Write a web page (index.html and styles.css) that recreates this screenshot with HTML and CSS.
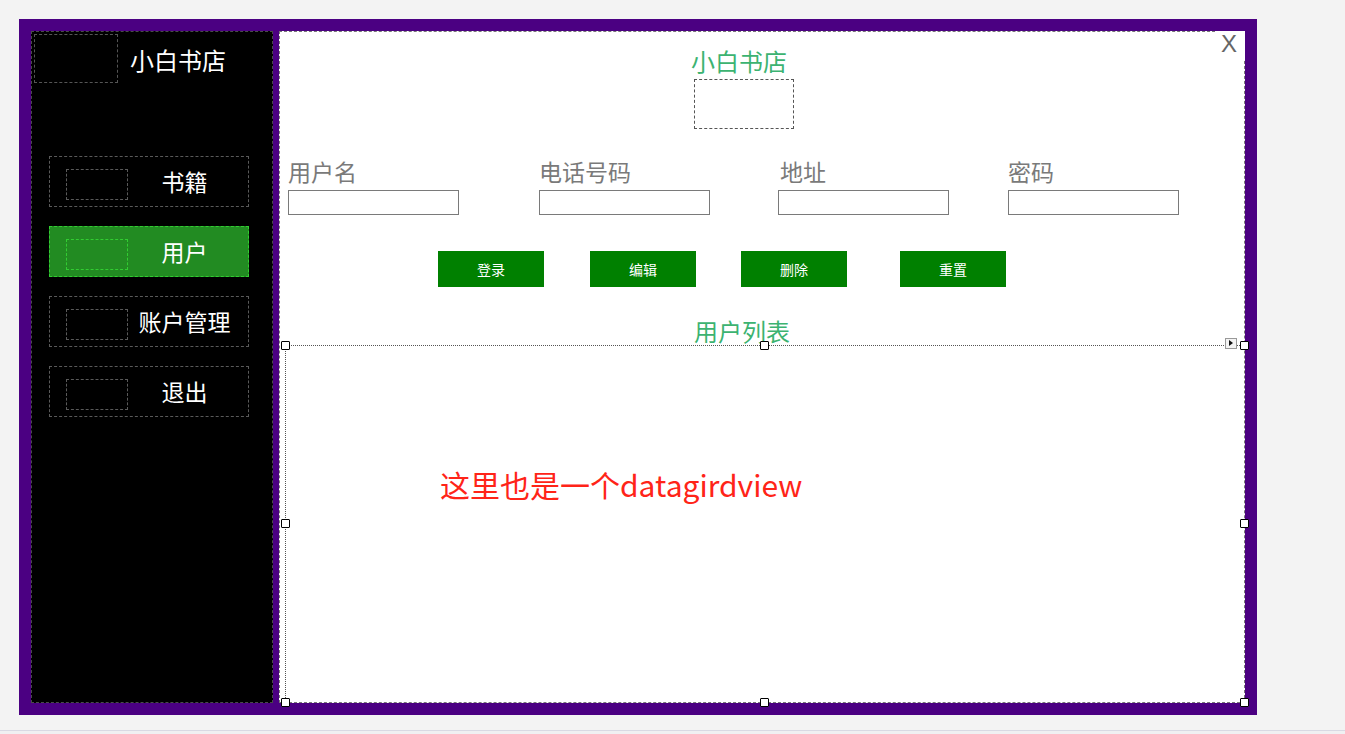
FILE: index.html
```html
<!DOCTYPE html>
<html lang="zh-CN">
<head>
<meta charset="utf-8">
<title>小白书店</title>
<link rel="stylesheet" href="styles.css">
</head>
<body>
<div class="form">
  <aside class="side">
    <div class="brand-row">
      <div class="logo"></div>
      <div class="brand">小白书店</div>
    </div>
    <nav class="nav">
      <div class="nav-item"><span class="nav-icon"></span><span class="nav-label">书籍</span></div>
      <div class="nav-item active"><span class="nav-icon"></span><span class="nav-label">用户</span></div>
      <div class="nav-item"><span class="nav-icon"></span><span class="nav-label">账户管理</span></div>
      <div class="nav-item"><span class="nav-icon"></span><span class="nav-label">退出</span></div>
    </nav>
  </aside>
  <main class="main">
    <div class="close">X</div>
    <div class="header">
      <div class="title">小白书店</div>
      <div class="pic"></div>
    </div>
    <div class="fields">
      <div class="field"><div class="label">用户名</div><div class="input"></div></div>
      <div class="field"><div class="label">电话号码</div><div class="input"></div></div>
      <div class="field"><div class="label label-shift">地址</div><div class="input"></div></div>
      <div class="field"><div class="label">密码</div><div class="input"></div></div>
    </div>
    <div class="actions">
      <button class="btn">登录</button>
      <button class="btn">编辑</button>
      <button class="btn">删除</button>
      <button class="btn">重置</button>
    </div>
    <div class="list-title">用户列表</div>
    <div class="grid">
      <span class="handle h-tl"></span>
      <span class="handle h-tm"></span>
      <span class="handle h-tr"></span>
      <span class="handle h-ml"></span>
      <span class="handle h-mr"></span>
      <span class="handle h-bl"></span>
      <span class="handle h-bm"></span>
      <span class="handle h-br"></span>
      <span class="smart-tag"></span>
      <p class="note">这里也是一个datagirdview</p>
    </div>
  </main>
</div>
<div class="statusbar"></div>
</body>
</html>
```

FILE: styles.css
```css
html, body {
  margin: 0;
  padding: 0;
}

body {
  background: #f3f3f3;
  width: 1345px;
  height: 734px;
  overflow: hidden;
  padding: 19px 0 0 19px;
  box-sizing: border-box;
  font-family: "Noto Sans CJK SC", "Noto Sans", sans-serif;
}

.form {
  width: 1238px;
  height: 696px;
  box-sizing: border-box;
  background: #4b0082;
  padding: 12px;
  display: flex;
  gap: 6px;
}

/* ---------- left side ---------- */
.side {
  width: 242px;
  flex: none;
  box-sizing: border-box;
  background: #000;
  border: 1px dashed #4a4a4a;
  display: flex;
  flex-direction: column;
}

.brand-row {
  display: flex;
  align-items: center;
  margin: 2px;
}

.logo {
  width: 84px;
  height: 49px;
  box-sizing: border-box;
  border: 1px dashed #555;
}

.brand {
  margin-left: 12px;
  padding-top: 2px;
  color: #fff;
  font-size: 24px;
  line-height: 28px;
}

.nav {
  margin: 71px 0 0 17px;
  display: flex;
  flex-direction: column;
  gap: 19px;
}

.nav-item {
  width: 200px;
  height: 51px;
  box-sizing: border-box;
  border: 1px dashed #5a5a5a;
  display: flex;
  align-items: center;
}

.nav-icon {
  align-self: flex-start;
  margin: 12px 0 0 16px;
  width: 62px;
  height: 31px;
  box-sizing: border-box;
  border: 1px dashed #5a5a5a;
}

.nav-label {
  flex: 1;
  text-align: center;
  padding: 0 7px 2px 0;
  color: #fff;
  font-size: 23px;
  line-height: 28px;
  white-space: nowrap;
}

.nav-item.active {
  background: #228b22;
  border-color: #32cd32;
}

.nav-item.active .nav-icon {
  border-color: #32cd32;
}

/* ---------- main panel ---------- */
.main {
  position: relative;
  width: 966px;
  flex: none;
  box-sizing: border-box;
  background: #fff;
  border: 1px dashed #777;
  display: flex;
  flex-direction: column;
}

.close {
  position: absolute;
  top: -1px;
  right: -1px;
  width: 30px;
  height: 28px;
  background: #fff;
  color: #666;
  font-family: "Liberation Sans", Arial, sans-serif;
  font-size: 24px;
  line-height: 26px;
  text-align: left;
  padding-left: 6px;
  box-sizing: border-box;
}

.header {
  padding: 15px 0 0 411px;
}

.title {
  color: #3cb371;
  font-size: 24px;
  line-height: 28px;
}

.pic {
  margin: 4px 0 0 3px;
  width: 100px;
  height: 50px;
  box-sizing: border-box;
  border: 1px dashed #555;
}

.fields {
  margin-top: 29px;
  padding-left: 8px;
  display: grid;
  grid-template-columns: 251px 239px 230px 171px;
}

.label {
  color: #7a7a7a;
  font-size: 23px;
  line-height: 26px;
  white-space: nowrap;
}

.label-shift {
  padding-left: 2px;
}

.input {
  margin-top: 6px;
  width: 171px;
  height: 25px;
  box-sizing: border-box;
  border: 1px solid #7a7a7a;
  background: #fff;
}

.actions {
  margin-top: 36px;
  padding-left: 158px;
  display: grid;
  grid-template-columns: 152px 151px 159px 106px;
}

.btn {
  width: 106px;
  height: 36px;
  border: none;
  margin: 0;
  padding: 0 0 1px;
  background: #008000;
  color: #fff;
  font-family: "Noto Sans CJK SC", sans-serif;
  font-size: 14px;
  line-height: 34px;
}

.list-title {
  margin: 30px 0 0 414px;
  color: #3cb371;
  font-size: 24px;
  line-height: 28px;
}

.grid {
  position: relative;
  flex: 1;
  margin-left: 5px;
  border-top: 1px dotted #555;
  border-left: 1px dotted #555;
  padding: 120px 0 0 154px;
}

.note {
  margin: 0;
  color: #ff2418;
  font-size: 30px;
  line-height: 36px;
  white-space: nowrap;
}

.handle {
  position: absolute;
  width: 9px;
  height: 9px;
  box-sizing: border-box;
  border: 1px solid #000;
  border-radius: 1px;
  background: #fff;
}

.h-tl { left: -5px; top: -5px; }
.h-tm { left: 50%; top: -5px; margin-left: -5px; }
.h-tr { right: -5px; top: -5px; }
.h-ml { left: -5px; top: 50%; margin-top: -5px; }
.h-mr { right: -5px; top: 50%; margin-top: -5px; }
.h-bl { left: -5px; bottom: -5px; }
.h-bm { left: 50%; bottom: -5px; margin-left: -5px; }
.h-br { right: -5px; bottom: -5px; }

.smart-tag {
  position: absolute;
  right: 7px;
  top: -8px;
  width: 12px;
  height: 11px;
  box-sizing: border-box;
  border: 1px solid #999;
  background: #f4f4f4;
}

.smart-tag::after {
  content: "";
  position: absolute;
  left: 3px;
  top: 1px;
  border-left: 4px solid #111;
  border-top: 3.5px solid transparent;
  border-bottom: 3.5px solid transparent;
}

.statusbar {
  margin: 15px 0 0 -19px;
  width: 1345px;
  height: 4px;
  border-top: 1px solid #d9d9e3;
  background: #f0f0f2;
}
```
